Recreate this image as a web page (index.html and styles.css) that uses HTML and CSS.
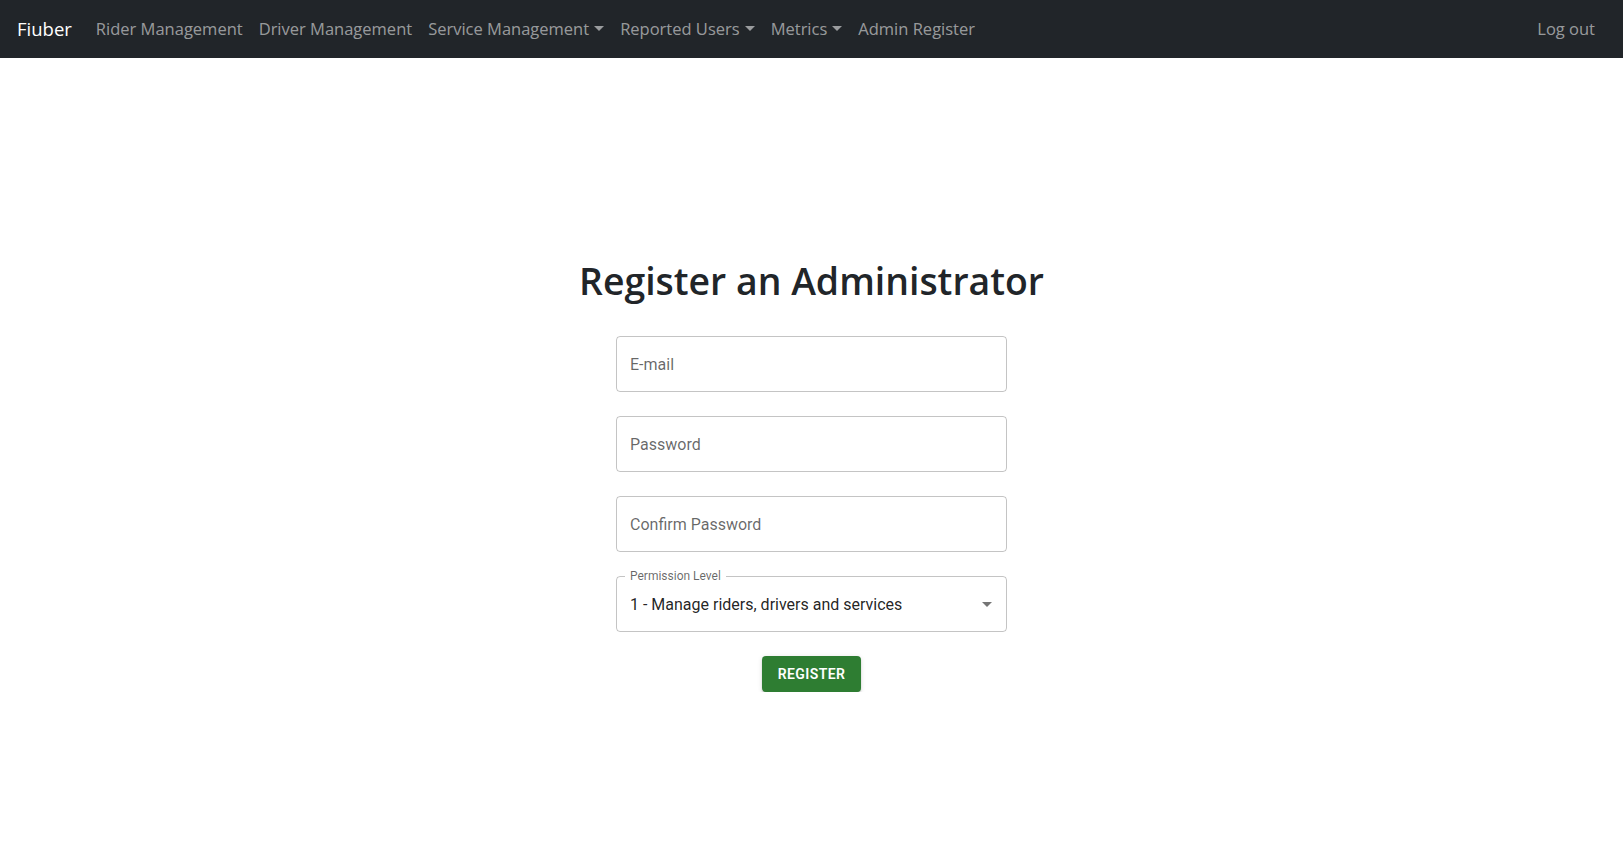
FILE: index.html
```html
<!DOCTYPE html>
<html lang="en">
<head>
<meta charset="utf-8">
<title>Fiuber - Admin Register</title>
<link rel="stylesheet" href="styles.css">
</head>
<body>
<nav class="navbar">
  <a class="brand" href="#">Fiuber</a>
  <ul class="nav-list">
    <li><a class="nav-link" href="#">Rider Management</a></li>
    <li><a class="nav-link" href="#">Driver Management</a></li>
    <li><a class="nav-link dropdown" href="#">Service Management</a></li>
    <li><a class="nav-link dropdown" href="#">Reported Users</a></li>
    <li><a class="nav-link dropdown" href="#">Metrics</a></li>
    <li><a class="nav-link" href="#">Admin Register</a></li>
  </ul>
  <a class="nav-link logout" href="#">Log out</a>
</nav>

<main class="page">
  <h1 class="title">Register an Administrator</h1>
  <form class="form">
    <div class="field"><input class="input" type="email" placeholder="E-mail"></div>
    <div class="field"><input class="input" type="password" placeholder="Password"></div>
    <div class="field"><input class="input" type="password" placeholder="Confirm Password"></div>
    <div class="field select-field">
      <span class="float-label">Permission Level</span>
      <span class="select-value">1 - Manage riders, drivers and services</span>
      <svg class="select-icon" viewBox="0 0 24 24" width="24" height="24"><path d="M7 10l5 5 5-5z"/></svg>
    </div>
    <button class="btn-register" type="button">Register</button>
  </form>
</main>
</body>
</html>
```

FILE: styles.css
```css
* { box-sizing: border-box; }

html, body {
  margin: 0;
  padding: 0;
  background: #fff;
}

body {
  font-family: "Open Sans", "Noto Sans", sans-serif;
  color: #212529;
}

.navbar {
  height: 58px;
  background: #212529;
  display: flex;
  align-items: center;
  padding: 0 20px 0 17px;
}

.brand {
  color: #fff;
  text-decoration: none;
  font-size: 18.5px;
  margin-right: 16px;
  line-height: 1;
}

.nav-list {
  list-style: none;
  margin: 0;
  padding: 0;
  display: flex;
  align-items: center;
}

.nav-link {
  display: block;
  color: rgba(255, 255, 255, 0.55);
  text-decoration: none;
  font-size: 16.5px;
  padding: 0 8px;
  line-height: 24px;
}

.dropdown::after {
  content: "";
  display: inline-block;
  margin-left: 5px;
  vertical-align: 4px;
  border-top: 5px solid;
  border-left: 5px solid transparent;
  border-right: 5px solid transparent;
  border-bottom: 0;
}

.logout {
  margin-left: auto;
}

.page {
  display: flex;
  flex-direction: column;
  align-items: center;
  padding-top: 201px;
}

.title {
  margin: 0 0 32.5px;
  font-size: 37.4px;
  font-weight: 600;
  line-height: 1.2;
  color: #212529;
}

.form {
  display: flex;
  flex-direction: column;
  align-items: center;
  gap: 24px;
  font-family: Roboto, "Liberation Sans", sans-serif;
}

.field {
  position: relative;
  width: 391px;
  height: 56px;
  border: 1px solid rgba(0, 0, 0, 0.23);
  border-radius: 4px;
  display: flex;
  align-items: center;
}

.input {
  width: 100%;
  height: 100%;
  border: 0;
  outline: none;
  background: transparent;
  padding: 0 13px;
  font-family: Roboto, "Liberation Sans", sans-serif;
  font-size: 16px;
  color: rgba(0, 0, 0, 0.87);
}

.input::placeholder {
  color: rgba(0, 0, 0, 0.6);
  opacity: 1;
}

.select-field {
  padding: 0 13px;
}

.float-label {
  position: absolute;
  top: -8px;
  left: 8px;
  padding: 0 5px;
  background: #fff;
  font-size: 12px;
  line-height: 14px;
  color: rgba(0, 0, 0, 0.6);
}

.select-value {
  font-size: 16px;
  color: rgba(0, 0, 0, 0.87);
  flex: 1;
}

.select-icon {
  position: absolute;
  right: 7px;
  top: 50%;
  margin-top: -12px;
  fill: rgba(0, 0, 0, 0.54);
}

.btn-register {
  height: 36px;
  padding: 0 16px;
  min-width: 64px;
  border: 0;
  border-radius: 4px;
  background: #2e7d32;
  color: #fff;
  font-family: Roboto, "Liberation Sans", sans-serif;
  font-size: 14px;
  font-weight: 600;
  letter-spacing: 0.4px;
  text-transform: uppercase;
  box-shadow: 0 3px 1px -2px rgba(0, 0, 0, 0.2), 0 2px 2px 0 rgba(0, 0, 0, 0.14), 0 1px 5px 0 rgba(0, 0, 0, 0.12);
  cursor: pointer;
}
```
